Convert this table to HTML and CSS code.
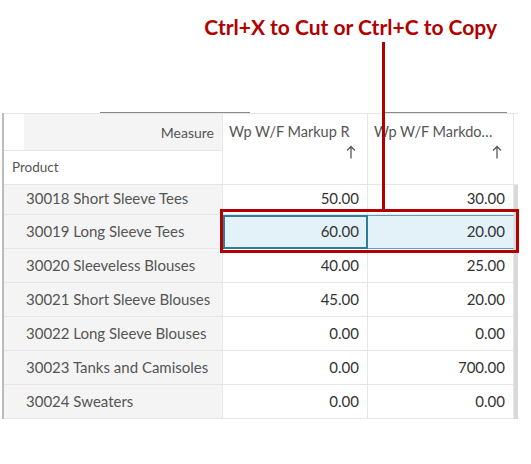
FILE: index.html
```html
<!DOCTYPE html>
<html>
<head>
<meta charset="utf-8">
<link rel="stylesheet" href="styles.css">
</head>
<body>
<div class="page">
  <div class="title">Ctrl+X to Cut or Ctrl+C to Copy</div>
  <div class="rule"><span class="seg seg1"></span><span class="seg seg2"></span></div>
  <div class="grid">
    <div class="corner"><div class="corner-blank"></div><div class="measure">Measure</div></div>
    <div class="colhead">
      <span class="colname">Wp W/F Markup R</span>
      <svg class="arrow" width="10" height="14" viewBox="0 0 10 14"><path d="M5 13.5V1.5M1 5.5L5 1.5L9 5.5" fill="none" stroke="#5a5a5a" stroke-width="1.3"/></svg>
    </div>
    <div class="colhead">
      <span class="colname">Wp W/F Markdo…</span>
      <svg class="arrow" width="10" height="14" viewBox="0 0 10 14"><path d="M5 13.5V1.5M1 5.5L5 1.5L9 5.5" fill="none" stroke="#5a5a5a" stroke-width="1.3"/></svg>
    </div>
    <div class="sbhead"></div>
    <div class="product">Product</div>

    <div class="rowhead first">30018 Short Sleeve Tees</div>
    <div class="num first">50.00</div>
    <div class="num first">30.00</div>
    <div class="sb"></div>

    <div class="rowhead">30019 Long Sleeve Tees</div>
    <div class="num sel focus"><span>60.00</span></div>
    <div class="num sel"><span>20.00</span></div>
    <div class="sb"></div>

    <div class="rowhead">30020 Sleeveless Blouses</div>
    <div class="num">40.00</div>
    <div class="num">25.00</div>
    <div class="sb"></div>

    <div class="rowhead">30021 Short Sleeve Blouses</div>
    <div class="num">45.00</div>
    <div class="num">20.00</div>
    <div class="sb"></div>

    <div class="rowhead">30022 Long Sleeve Blouses</div>
    <div class="num">0.00</div>
    <div class="num">0.00</div>
    <div class="sb"></div>

    <div class="rowhead">30023 Tanks and Camisoles</div>
    <div class="num">0.00</div>
    <div class="num">700.00</div>
    <div class="sb"></div>

    <div class="rowhead">30024 Sweaters</div>
    <div class="num">0.00</div>
    <div class="num">0.00</div>
    <div class="sb"></div>
  </div>
  <div class="callout-line"></div>
  <div class="callout-box"></div>
</div>
</body>
</html>
```
FILE: styles.css
```css
* { box-sizing: border-box; }
html, body { margin: 0; padding: 0; background: #fff; }
.page {
  position: relative;
  width: 531px;
  height: 464px;
  overflow: hidden;
  font-family: Lato, "Open Sans", sans-serif;
}
.title {
  height: 42px;
  padding-top: 13px;
  padding-right: 34px;
  text-align: right;
  font-family: Lato, "Liberation Sans", sans-serif;
  font-weight: 700;
  font-size: 21px;
  line-height: 28px;
  color: #b00000;
}
.rule {
  margin-top: 70px;
  height: 1px;
  display: flex;
}
.seg { display: block; height: 1px; background: #8a8a8a; }
.seg1 { margin-left: 100px; width: 150px; }
.seg2 { margin-left: 135px; width: 122px; }
.grid {
  margin-left: 2px;
  width: 516px;
  border-left: 2px solid #bdbdbd;
  display: grid;
  grid-template-columns: 219px 145px 146px 4px;
  grid-template-rows: 38px 34px 30px repeat(6, 34px);
  color: #555;
}
.grid > div {
  border-bottom: 1px solid #e6e6e6;
}
.corner {
  display: flex;
  border-top: 1px solid #e6e6e6;
  border-right: 1px solid #e6e6e6;
}
.corner-blank { width: 20px; background: #fff; }
.measure {
  flex: 1;
  background: #f4f4f4;
  text-align: right;
  padding-right: 8px;
  font-size: 14px;
  line-height: 38px;
  color: #555;
}
.colhead {
  grid-row: span 2;
  border-top: 1px solid #e6e6e6;
  border-right: 1px solid #e6e6e6;
  display: flex;
  flex-direction: column;
  padding: 9px 11px 0 6px;
  font-size: 14.5px;
  line-height: 18px;
}
.colname { white-space: nowrap; }
.arrow { align-self: flex-end; margin-top: 4px; }
.sbhead { grid-row: span 2; border-bottom: 1px solid #e6e6e6; border-top: 1px solid #e6e6e6; }
.product {
  border-right: 1px solid #e6e6e6;
  padding-left: 8px;
  font-size: 13.5px;
  line-height: 32px;
  background: #fff;
}
.rowhead {
  background: #f4f4f4;
  border-right: 1px solid #e6e6e6;
  padding-left: 22px;
  padding-bottom: 2px;
  font-size: 15px;
  display: flex;
  align-items: center;
  white-space: nowrap;
}
.num {
  border-right: 1px solid #e6e6e6;
  padding-right: 8px;
  padding-bottom: 2px;
  font-size: 15px;
  color: #333;
  display: flex;
  align-items: center;
  justify-content: flex-end;
}
.first { padding-bottom: 4px; }
.sb { background: #d9d9d9; border-bottom-color: #d9d9d9 !important; }
.num.sel {
  background: #e3f1f8;
  border-top: 1px solid #5a9fbd;
  border-bottom: 1px solid #5a9fbd;
}
.num.focus {
  border: 2px solid #2e7d98;
  padding-right: 7px;
}
.callout-line {
  position: absolute;
  left: 382px;
  top: 42px;
  width: 3px;
  height: 168px;
  background: #b00000;
}
.callout-box {
  position: absolute;
  left: 220px;
  top: 209px;
  width: 299px;
  height: 44px;
  border: 3px solid #b00000;
}
```
